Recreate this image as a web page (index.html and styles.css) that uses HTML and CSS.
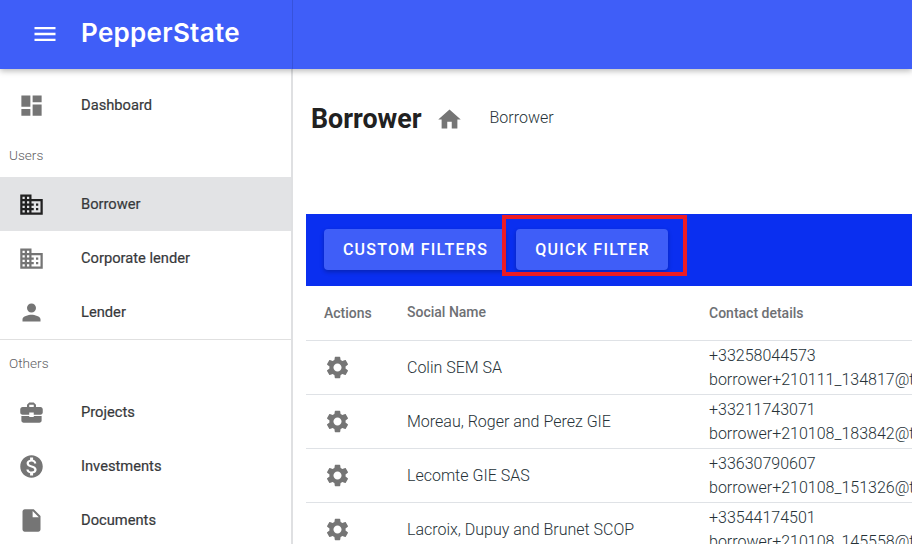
FILE: index.html
```html
<!DOCTYPE html>
<html lang="en">
<head>
<meta charset="utf-8">
<title>Borrower</title>
<link rel="stylesheet" href="styles.css">
</head>
<body>
<svg class="defs" width="0" height="0" aria-hidden="true">
  <symbol id="i-menu" viewBox="0 0 24 24"><path d="M3 18h18v-2H3v2zm0-5h18v-2H3v2zm0-7v2h18V6H3z"/></symbol>
  <symbol id="i-dashboard" viewBox="0 0 24 24"><path d="M3 13h8V3H3v10zm0 8h8v-6H3v6zm10 0h8V11h-8v10zm0-18v6h8V3h-8z"/></symbol>
  <symbol id="i-domain" viewBox="0 0 24 24"><path d="M12 7V3H2v18h20V7H12zM6 19H4v-2h2v2zm0-4H4v-2h2v2zm0-4H4V9h2v2zm0-4H4V5h2v2zm4 12H8v-2h2v2zm0-4H8v-2h2v2zm0-4H8V9h2v2zm0-4H8V5h2v2zm10 12h-8v-2h2v-2h-2v-2h2v-2h-2V9h8v10zm-2-8h-2v2h2v-2zm0 4h-2v2h2v-2z"/></symbol>
  <symbol id="i-person" viewBox="0 0 24 24"><path d="M12 12c2.21 0 4-1.79 4-4s-1.79-4-4-4-4 1.79-4 4 1.79 4 4 4zm0 2c-2.67 0-8 1.34-8 4v2h16v-2c0-2.66-5.33-4-8-4z"/></symbol>
  <symbol id="i-work" viewBox="0 0 24 24"><path d="M10 16v-1H3.01L3 19c0 1.11.89 2 2 2h14c1.11 0 2-.89 2-2v-4h-7v1h-4zm10-9h-4.01V5l-2-2h-4l-2 2v2H4c-1.1 0-2 .9-2 2v3c0 1.11.89 2 2 2h6v-2h4v2h6c1.1 0 2-.9 2-2V9c0-1.1-.9-2-2-2zm-6 0h-4V5h4v2z"/></symbol>
  <symbol id="i-money" viewBox="0 0 24 24"><path d="M12 2C6.48 2 2 6.48 2 12s4.48 10 10 10 10-4.48 10-10S17.52 2 12 2zm1.41 16.09V20h-2.67v-1.93c-1.71-.36-3.16-1.46-3.27-3.4h1.96c.1 1.05.82 1.87 2.65 1.87 1.96 0 2.4-.98 2.4-1.59 0-.83-.44-1.61-2.67-2.14-2.48-.6-4.18-1.62-4.18-3.67 0-1.72 1.39-2.84 3.11-3.21V4h2.67v1.95c1.86.45 2.79 1.86 2.85 3.39H14.3c-.05-1.11-.64-1.87-2.22-1.87-1.5 0-2.4.68-2.4 1.64 0 .84.65 1.39 2.67 1.91s4.18 1.39 4.18 3.91c-.01 1.83-1.38 2.83-3.12 3.16z"/></symbol>
  <symbol id="i-file" viewBox="0 0 24 24"><path d="M6 2c-1.1 0-1.99.9-1.99 2L4 20c0 1.1.89 2 1.99 2H18c1.1 0 2-.9 2-2V8l-6-6H6zm7 7V3.5L18.5 9H13z"/></symbol>
  <symbol id="i-home" viewBox="0 0 24 24"><path d="M10 20v-6h4v6h5v-8h3L12 3 2 12h3v8z"/></symbol>
  <symbol id="i-gear" viewBox="0 0 24 24"><path d="M19.14 12.94c.04-.3.06-.61.06-.94 0-.32-.02-.64-.07-.94l2.03-1.58c.18-.14.23-.41.12-.61l-1.92-3.32c-.12-.22-.37-.29-.59-.22l-2.39.96c-.5-.38-1.03-.7-1.62-.94l-.36-2.54c-.04-.24-.24-.41-.48-.41h-3.84c-.24 0-.43.17-.47.41l-.36 2.54c-.59.24-1.13.57-1.62.94l-2.39-.96c-.22-.08-.47 0-.59.22L2.74 8.87c-.12.21-.08.47.12.61l2.03 1.58c-.05.3-.09.63-.09.94s.02.64.07.94l-2.03 1.58c-.18.14-.23.41-.12.61l1.92 3.32c.12.22.37.29.59.22l2.39-.96c.5.38 1.03.7 1.62.94l.36 2.54c.05.24.24.41.48.41h3.84c.24 0 .44-.17.47-.41l.36-2.54c.59-.24 1.13-.56 1.62-.94l2.39.96c.22.08.47 0 .59-.22l1.92-3.32c.12-.22.07-.47-.12-.61l-2.01-1.58zM12 15.6c-1.98 0-3.6-1.62-3.6-3.6s1.62-3.6 3.6-3.6 3.6 1.62 3.6 3.6-1.62 3.6-3.6 3.6z"/></symbol>
</svg>

<div class="app">
  <header class="topbar">
    <div class="brand">
      <svg class="icon menu-icon"><use href="#i-menu"/></svg>
      <span class="logo">PepperState</span>
    </div>
  </header>

  <div class="body">
    <nav class="sidebar">
      <a class="nav-item first"><svg class="icon"><use href="#i-dashboard"/></svg><span>Dashboard</span></a>
      <div class="nav-label">Users</div>
      <a class="nav-item active"><svg class="icon"><use href="#i-domain"/></svg><span>Borrower</span></a>
      <a class="nav-item"><svg class="icon"><use href="#i-domain"/></svg><span>Corporate lender</span></a>
      <a class="nav-item"><svg class="icon"><use href="#i-person"/></svg><span>Lender</span></a>
      <div class="nav-divider"></div>
      <div class="nav-label">Others</div>
      <a class="nav-item"><svg class="icon"><use href="#i-work"/></svg><span>Projects</span></a>
      <a class="nav-item"><svg class="icon"><use href="#i-money"/></svg><span>Investments</span></a>
      <a class="nav-item"><svg class="icon"><use href="#i-file"/></svg><span>Documents</span></a>
    </nav>

    <main class="main">
      <div class="page-head">
        <h1 class="page-title">Borrower</h1>
        <svg class="icon home-icon"><use href="#i-home"/></svg>
        <span class="crumb">Borrower</span>
      </div>

      <div class="filter-band">
        <button class="btn btn-custom">CUSTOM FILTERS</button>
        <button class="btn btn-quick">QUICK FILTER</button>
        <div class="highlight"></div>
      </div>

      <div class="table">
        <div class="row head">
          <div class="col-actions">Actions</div>
          <div class="col-name name-head">Social Name</div>
          <div class="col-contact">Contact details</div>
        </div>
        <div class="row">
          <div class="col-actions"><svg class="icon gear"><use href="#i-gear"/></svg></div>
          <div class="col-name">Colin SEM SA</div>
          <div class="col-contact">+33258044573<br>borrower+210111_134817@test.com</div>
        </div>
        <div class="row">
          <div class="col-actions"><svg class="icon gear"><use href="#i-gear"/></svg></div>
          <div class="col-name">Moreau, Roger and Perez GIE</div>
          <div class="col-contact">+33211743071<br>borrower+210108_183842@test.com</div>
        </div>
        <div class="row">
          <div class="col-actions"><svg class="icon gear"><use href="#i-gear"/></svg></div>
          <div class="col-name">Lecomte GIE SAS</div>
          <div class="col-contact">+33630790607<br>borrower+210108_151326@test.com</div>
        </div>
        <div class="row">
          <div class="col-actions"><svg class="icon gear"><use href="#i-gear"/></svg></div>
          <div class="col-name">Lacroix, Dupuy and Brunet SCOP</div>
          <div class="col-contact">+33544174501<br>borrower+210108_145558@test.com</div>
        </div>
      </div>
    </main>
  </div>
</div>
```

FILE: styles.css
```css
* { box-sizing: border-box; }

html, body {
  margin: 0;
  height: 100%;
  overflow: hidden;
  background: #fff;
  font-family: Roboto, "Liberation Sans", sans-serif;
  color: #263238;
}

.defs { position: absolute; }

.app {
  height: 544px;
  display: flex;
  flex-direction: column;
  overflow: hidden;
}

.icon {
  width: 27px;
  height: 27px;
  flex: none;
  fill: #757575;
}

/* Top bar */
.topbar {
  height: 69px;
  flex: none;
  background: #3f5ef8;
  box-shadow: 0 2px 6px rgba(0, 0, 0, .28);
  position: relative;
  z-index: 2;
}

.brand {
  width: 293px;
  height: 100%;
  display: flex;
  align-items: center;
  padding-left: 31px;
  border-right: 1px solid #3752db;
}

.menu-icon {
  width: 28px;
  height: 28px;
  margin-top: -2px;
  fill: #fff;
}

.logo {
  margin-left: 22px;
  margin-top: -5px;
  font-family: Inter, sans-serif;
  font-weight: 600;
  font-size: 26px;
  letter-spacing: .3px;
  color: #fff;
}

/* Layout */
.body {
  flex: 1;
  display: flex;
  min-height: 0;
}

/* Sidebar */
.sidebar {
  width: 293px;
  flex: none;
  border-right: 2px solid #dfe0e2;
  padding-top: 9px;
}

.nav-item {
  height: 54px;
  display: flex;
  align-items: center;
  padding-left: 18px;
  font-size: 14.7px;
  font-weight: 400;
  color: #37393b;
  -webkit-text-stroke: .2px #37393b;
}

.nav-item span { margin-left: 36px; }

.nav-item.active { background: #e2e3e5; }
.nav-item.active .icon { fill: #212121; }

.nav-label {
  height: 45px;
  padding: 16px 0 0 9px;
  font-size: 13.6px;
  line-height: 15px;
  font-weight: 300;
  color: #5f6164;
}

.nav-divider {
  height: 1px;
  background: #e0e0e0;
}

/* Main */
.main {
  flex: 1;
  min-width: 0;
  padding-left: 13px;
}

.page-head {
  height: 145px;
  display: flex;
  align-items: flex-start;
  padding: 33px 0 0 5px;
}

.page-title {
  margin: 0;
  font-size: 26.8px;
  line-height: 34px;
  font-weight: 700;
  color: #212121;
}

.home-icon { margin: 4px 0 0 14px; }

.crumb {
  margin: 6px 0 0 27px;
  font-size: 16px;
  line-height: 20px;
  font-weight: 300;
  color: #263238;
}

/* Filter band */
.filter-band {
  position: relative;
  height: 72px;
  display: flex;
  align-items: flex-start;
  gap: 10px;
  padding: 15px 0 0 18px;
  background: #0a2ff0;
}

.btn {
  height: 41px;
  border: 0;
  padding: 0 0 0 1px;
  border-radius: 4px;
  background: #3f5ef8;
  color: #fff;
  font-family: Roboto, sans-serif;
  font-size: 16px;
  font-weight: 500;
  letter-spacing: 1.25px;
  box-shadow: 0 2px 4px rgba(0, 0, 0, .25);
}

.btn-custom { width: 182px; }
.btn-quick { width: 152px; }

.highlight {
  position: absolute;
  left: 196px;
  top: 1px;
  width: 185px;
  height: 61px;
  border: 4px solid #ed1c24;
}

/* Table */
.table { font-size: 16px; }

.row {
  height: 54px;
  display: grid;
  grid-template-columns: 83px 302px 1fr;
  align-items: center;
  padding-left: 18px;
  border-bottom: 1px solid #dfe2e6;
  color: #263238;
  font-weight: 300;
  white-space: nowrap;
  overflow: hidden;
  line-height: 24px;
}

.row.head {
  height: 55px;
  font-size: 14px;
  font-weight: 500;
  color: #6e7074;
}

.col-actions { display: flex; align-items: center; }

.gear { margin-left: 0; }

.name-head { margin-top: -2px; }
```
